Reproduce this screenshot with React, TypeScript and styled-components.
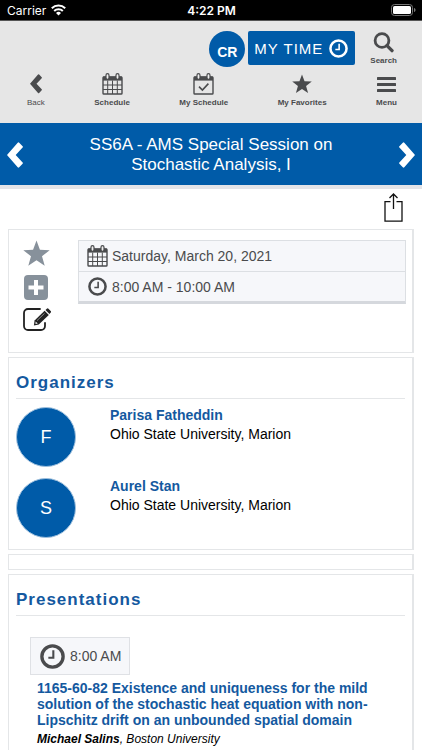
import React from "react";
import styled, { createGlobalStyle, css } from "styled-components";

const blue = "#005ba8";
const ink = "#4a4b4d";
const line = "#e4e6e8";

const GlobalStyle = createGlobalStyle`
  *, *::before, *::after { box-sizing: border-box; }
  body {
    margin: 0;
    background: #fff;
    color: #000;
    font-family: "Liberation Sans", Arial, Helvetica, sans-serif;
    font-size: 14px;
    overflow-x: hidden;
  }
  h1, h2, h3, p, ul, dl, dd { margin: 0; padding: 0; }
  ul { list-style: none; }
  svg { display: block; flex: none; }
  button {
    font: inherit;
    color: inherit;
    border: 0;
    padding: 0;
    background: none;
    cursor: pointer;
  }
  a { color: inherit; text-decoration: none; }
`;

const Screen = styled.div`
  height: 100vh;
  overflow: hidden;
  display: flex;
  flex-direction: column;
`;

const StatusBar = styled.div`
  flex: none;
  display: grid;
  grid-template-columns: 1fr auto 1fr;
  align-items: center;
  height: 21px;
  padding: 0 6px 0 7px;
  background: #000;
  border-bottom: 1px solid #555;
  color: #fff;
  font-family: Inter, Roboto, sans-serif;
  font-size: 12px;
`;

const Carrier = styled.span`
  display: flex;
  align-items: center;
  gap: 5px;
`;

const Clock = styled.span`
  font-weight: 600;
`;

const BatterySlot = styled.span`
  display: flex;
  justify-content: flex-end;
`;

const TopBar = styled.header`
  flex: none;
  background: #e6e6e6;
  color: ${ink};
  padding: 10px 25px 15px 27px;
`;

const ToolRow = styled.div`
  display: flex;
  justify-content: flex-end;
  align-items: flex-start;
`;

const UserBadge = styled.button`
  width: 36px;
  height: 36px;
  border-radius: 50%;
  background: ${blue};
  color: #fff;
  font-size: 14px;
  font-weight: 700;
  padding-top: 6px;
  margin-right: 3px;
`;

const TimeButton = styled.button`
  display: flex;
  align-items: center;
  gap: 6px;
  height: 34px;
  padding: 0 7px 0 6px;
  margin-right: 15px;
  border-radius: 2px;
  background: ${blue};
  color: #fff;
  font-size: 15px;
  letter-spacing: 1px;
`;

const NavRow = styled.nav`
  display: flex;
  justify-content: space-between;
  margin-top: 6px;
`;

const IconButton = styled.button<{ $plain?: boolean }>`
  display: flex;
  flex-direction: column;
  align-items: center;
  gap: 2px;
  font-size: 8px;
  line-height: 11px;
  font-weight: ${(p) => (p.$plain ? 400 : 700)};
  white-space: nowrap;
`;

const TitleBar = styled.div`
  flex: none;
  display: flex;
  align-items: center;
  justify-content: space-between;
  min-height: 62px;
  padding: 2px 7px 0;
  background: ${blue};
  color: #fff;
`;

const Title = styled.h1`
  max-width: 270px;
  font-size: 17px;
  line-height: 20px;
  font-weight: 400;
  text-align: center;
`;

const Content = styled.main`
  flex: 1;
  min-height: 0;
  overflow: hidden;
  border-top: 4px solid #e3e4e8;
  padding: 0 8px;
`;

const ShareRow = styled.div`
  display: flex;
  justify-content: flex-end;
  padding: 4px 11px 7px;
`;

const Card = styled.section`
  border: 1px solid ${line};
  border-right-width: 2px;
  padding: 0 7px;
  margin-bottom: 4px;
`;

const Summary = styled(Card)`
  display: flex;
  gap: 27px;
  min-height: 124px;
  padding: 10px 6px 0 14px;
`;

const Actions = styled.div`
  display: flex;
  flex-direction: column;
  gap: 8px;
`;

const Facts = styled.ul`
  flex: 1;
  align-self: flex-start;
  border: 1px solid #dcdfe3;
  border-bottom: 3px solid #d5d8dd;
  background: #f6f7fa;
  color: ${ink};
`;

const Fact = styled.li`
  display: flex;
  align-items: center;
  gap: 4px;
  height: 30px;
  padding-left: 8px;
  & + & {
    border-top: 1px solid #dcdfe3;
  }
`;

const FactIcon = styled.span`
  display: flex;
  justify-content: center;
  width: 21px;
`;

const Heading = styled.h2`
  padding: 14px 0 5px;
  border-bottom: 1px solid ${line};
  color: #14599f;
  font-size: 17px;
  line-height: 21px;
  font-weight: 700;
  letter-spacing: 1px;
`;

const People = styled.ul`
  display: flex;
  flex-direction: column;
  gap: 11px;
  padding: 8px 0 11px;
`;

const Person = styled.li`
  display: flex;
  gap: 34px;
`;

const Avatar = styled.span`
  display: grid;
  place-items: center;
  flex: none;
  width: 60px;
  height: 60px;
  border: 1px solid #9dbfdd;
  border-radius: 50%;
  background: ${blue};
  color: #fff;
  font-size: 18px;
`;

const linkText = css`
  color: #14599f;
  font-weight: 700;
`;

const PersonName = styled.a`
  ${linkText}
  display: block;
  line-height: 17px;
`;

const Affiliation = styled.p`
  line-height: 21px;
`;

const Spacer = styled(Card)`
  height: 16px;
`;

const Talk = styled.article`
  padding: 21px 14px 20px;
`;

const TimeTag = styled.p`
  display: inline-flex;
  align-items: center;
  gap: 5px;
  height: 38px;
  padding: 0 8px 0 9px;
  border: 1px solid #dfe1e5;
  background: #f6f7fa;
  color: ${ink};
`;

const TalkTitle = styled.h3`
  margin: 5px 0 0 7px;
  font-size: 14px;
  line-height: 16px;
  a {
    ${linkText}
  }
`;

const Author = styled.p`
  margin: 3px 0 0 7px;
  font-size: 12px;
  line-height: 16px;
  font-style: italic;
`;

const WifiIcon = () => (
  <svg width="15" height="12" viewBox="0 0 15 12" fill="none" stroke="#fff" strokeWidth="2">
    <path d="M0.8 4.2a9.6 9.6 0 0 1 13.4 0" />
    <path d="M3.2 7a6.2 6.2 0 0 1 8.6 0" />
    <path d="M7.5 11.6 5 9a3.6 3.6 0 0 1 5 0z" fill="#fff" stroke="none" />
  </svg>
);

const BatteryIcon = () => (
  <svg width="25" height="12" viewBox="0 0 25 12">
    <rect x="0.5" y="0.5" width="21" height="11" rx="3" fill="none" stroke="#777" />
    <rect x="2" y="2" width="18" height="8" rx="1.6" fill="#fff" />
    <path d="M23 4v4c1-.3 1.5-1 1.5-2S24 4.300 23 4z" fill="#777" />
  </svg>
);

const ClockIcon = ({ size }: { size: number }) => (
  <svg width={size} height={size} viewBox="0 0 24 24" fill="none" stroke="currentColor">
    <circle cx="12" cy="12" r="10.200" strokeWidth="3.200" />
    <path d="M12.800 6v7.200H8" strokeWidth="2" />
  </svg>
);

const Chevron = ({ size, right }: { size: number; right?: boolean }) => (
  <svg width={size} height={(size * 26) / 16} viewBox="0 0 16 26" fill="currentColor">
    <path
      d={
        right
          ? "M.4 4.200 3.800.8a1 1 0 0 1 1.500 0L16 13 5.300 25.200a1 1 0 0 1-1.500 0L.4 21.800a1 1 0 0 1 0-1.400L7.300 13 .4 5.600a1 1 0 0 1 0-1.400z"
          : "M15.600 4.200 12.200.8a1 1 0 0 0-1.500 0L0 13l10.700 12.200a1 1 0 0 0 1.500 0l3.400-3.400a1 1 0 0 0 0-1.400L8.700 13l6.900-7.400a1 1 0 0 0 0-1.400z"
      }
    />
  </svg>
);

const CalendarIcon = ({ checked }: { checked?: boolean }) => (
  <svg width="21" height="22" viewBox="0 0 21 22" fill="none" stroke="currentColor">
    <rect x="1" y="4" width="19" height="17" rx="0.8" strokeWidth="1.400" />
    <path d="M1 3.600h19v4H1z" fill="currentColor" stroke="none" />
    <rect x="4" y="0.700" width="3" height="5.600" rx="1.500" fill="#eee" strokeWidth="1.200" />
    <rect x="14" y="0.700" width="3" height="5.600" rx="1.500" fill="#eee" strokeWidth="1.200" />
    {checked ? (
      <path d="M6 13.600l3.400 3.400 6-6.400" strokeWidth="1.600" />
    ) : (
      <path d="M1 12h19M1 16.500h19M5.700 7.500v13.500M10.500 7.500v13.500M15.300 7.500v13.500" strokeWidth="1" />
    )}
  </svg>
);

const StarIcon = ({ size, color = "currentColor" }: { size: number; color?: string }) => (
  <svg width={size} height={size} viewBox="0 0 26 26" fill={color}>
    <path d="M13 .6l3.300 8.800 9.400.4-7.400 5.800 2.600 9.100L13 19.500l-7.900 5.200 2.600-9.100L.3 9.800l9.400-.4z" />
  </svg>
);

const SearchIcon = () => (
  <svg width="21" height="21" viewBox="0 0 21 21" fill="none" stroke="currentColor">
    <circle cx="9" cy="8.500" r="6.900" strokeWidth="2.800" />
    <path d="M14 13.600l5 5" strokeWidth="3.400" strokeLinecap="round" />
  </svg>
);

const MenuIcon = () => (
  <svg width="19" height="21" viewBox="0 0 19 21" fill="currentColor">
    <rect x="0" y="3" width="19" height="3" rx="0.500" />
    <rect x="0" y="9" width="19" height="3" rx="0.500" />
    <rect x="0" y="15" width="19" height="3" rx="0.500" />
  </svg>
);

const ShareIcon = () => (
  <svg width="19" height="29" viewBox="0 0 19 29" fill="none" stroke="#111" strokeWidth="1.300">
    <path d="M6.500 8.700H1v19.500h17V8.700h-5.500" />
    <path d="M9.500 16V1.500M5.500 5l4-4 4 4" />
  </svg>
);

const PlusIcon = () => (
  <svg width="26" height="25" viewBox="0 0 26 25">
    <rect x="1" y="0" width="24" height="25" rx="4" fill="#87919b" />
    <path d="M13 5v15M5.500 12.500h15" stroke="#fff" strokeWidth="4" />
  </svg>
);

const EditIcon = () => (
  <svg width="28" height="23" viewBox="0 0 28 23" fill="none" stroke="#222">
    <path
      d="M17 1H5a4 4 0 0 0-4 4v13a4 4 0 0 0 4 4h13a4 4 0 0 0 4-4v-3"
      strokeWidth="1.800"
      strokeLinecap="round"
    />
    <path d="M21.600 2.800l4.200 4.200-10 9.600-4.900.9.700-5.100z" fill="#222" stroke="none" />
    <path d="M22.500 2l1.300-1.300a1.200 1.200 0 0 1 1.700 0l2.200 2.200a1.200 1.200 0 0 1 0 1.700L26.500 6z" fill="#222" stroke="none" />
    <path d="M14 12.600l7.500-7.200" stroke="#aaa" strokeWidth="0.800" />
    <path d="M12.600 13.400l2.200 2.200-2.300.4z" fill="#fff" stroke="none" />
  </svg>
);

const navItems = [
  { label: "Back", icon: <Chevron size={12} />, plain: true },
  { label: "Schedule", icon: <CalendarIcon /> },
  { label: "My Schedule", icon: <CalendarIcon checked /> },
  { label: "My Favorites", icon: <StarIcon size={20} /> },
  { label: "Menu", icon: <MenuIcon /> },
];

const NavIcon = styled.span`
  display: flex;
  align-items: center;
  height: 22px;
`;

const organizers = [
  { name: "Parisa Fatheddin", place: "Ohio State University, Marion", initial: "F" },
  { name: "Aurel Stan", place: "Ohio State University, Marion", initial: "S" },
];

export default function App() {
  return (
    <Screen>
      <GlobalStyle />
      <StatusBar>
        <Carrier>
          Carrier
          <WifiIcon />
        </Carrier>
        <Clock>4:22 PM</Clock>
        <BatterySlot>
          <BatteryIcon />
        </BatterySlot>
      </StatusBar>

      <TopBar>
        <ToolRow>
          <UserBadge type="button">CR</UserBadge>
          <TimeButton type="button">
            MY TIME
            <ClockIcon size={19} />
          </TimeButton>
          <IconButton type="button">
            <NavIcon>
              <SearchIcon />
            </NavIcon>
            Search
          </IconButton>
        </ToolRow>
        <NavRow>
          {navItems.map((item) => (
            <IconButton key={item.label} type="button" $plain={item.plain}>
              <NavIcon>{item.icon}</NavIcon>
              {item.label}
            </IconButton>
          ))}
        </NavRow>
      </TopBar>

      <TitleBar>
        <button type="button" aria-label="Previous session">
          <Chevron size={16} />
        </button>
        <Title>SS6A - AMS Special Session on Stochastic Analysis, I</Title>
        <button type="button" aria-label="Next session">
          <Chevron size={16} right />
        </button>
      </TitleBar>

      <Content>
        <ShareRow>
          <button type="button" aria-label="Share">
            <ShareIcon />
          </button>
        </ShareRow>

        <Summary>
          <Actions>
            <button type="button" aria-label="Add to favorites">
              <StarIcon size={27} color="#87919b" />
            </button>
            <button type="button" aria-label="Add to schedule">
              <PlusIcon />
            </button>
            <button type="button" aria-label="Edit notes">
              <EditIcon />
            </button>
          </Actions>
          <Facts>
            <Fact>
              <FactIcon>
                <CalendarIcon />
              </FactIcon>
              Saturday, March 20, 2021
            </Fact>
            <Fact>
              <FactIcon>
                <ClockIcon size={19} />
              </FactIcon>
              8:00 AM - 10:00 AM
            </Fact>
          </Facts>
        </Summary>

        <Card>
          <Heading>Organizers</Heading>
          <People>
            {organizers.map((person) => (
              <Person key={person.name}>
                <Avatar>{person.initial}</Avatar>
                <div>
                  <PersonName href="#">{person.name}</PersonName>
                  <Affiliation>{person.place}</Affiliation>
                </div>
              </Person>
            ))}
          </People>
        </Card>

        <Spacer aria-hidden="true" />

        <Card>
          <Heading>Presentations</Heading>
          <Talk>
            <TimeTag>
              <ClockIcon size={25} />
              8:00 AM
            </TimeTag>
            <TalkTitle>
              <a href="#">
                1165-60-82 Existence and uniqueness for the mild solution of the stochastic heat
                equation with non-Lipschitz drift on an unbounded spatial domain
              </a>
            </TalkTitle>
            <Author>
              <b>Michael Salins</b>, Boston University
            </Author>
          </Talk>
        </Card>
      </Content>
    </Screen>
  );
}
